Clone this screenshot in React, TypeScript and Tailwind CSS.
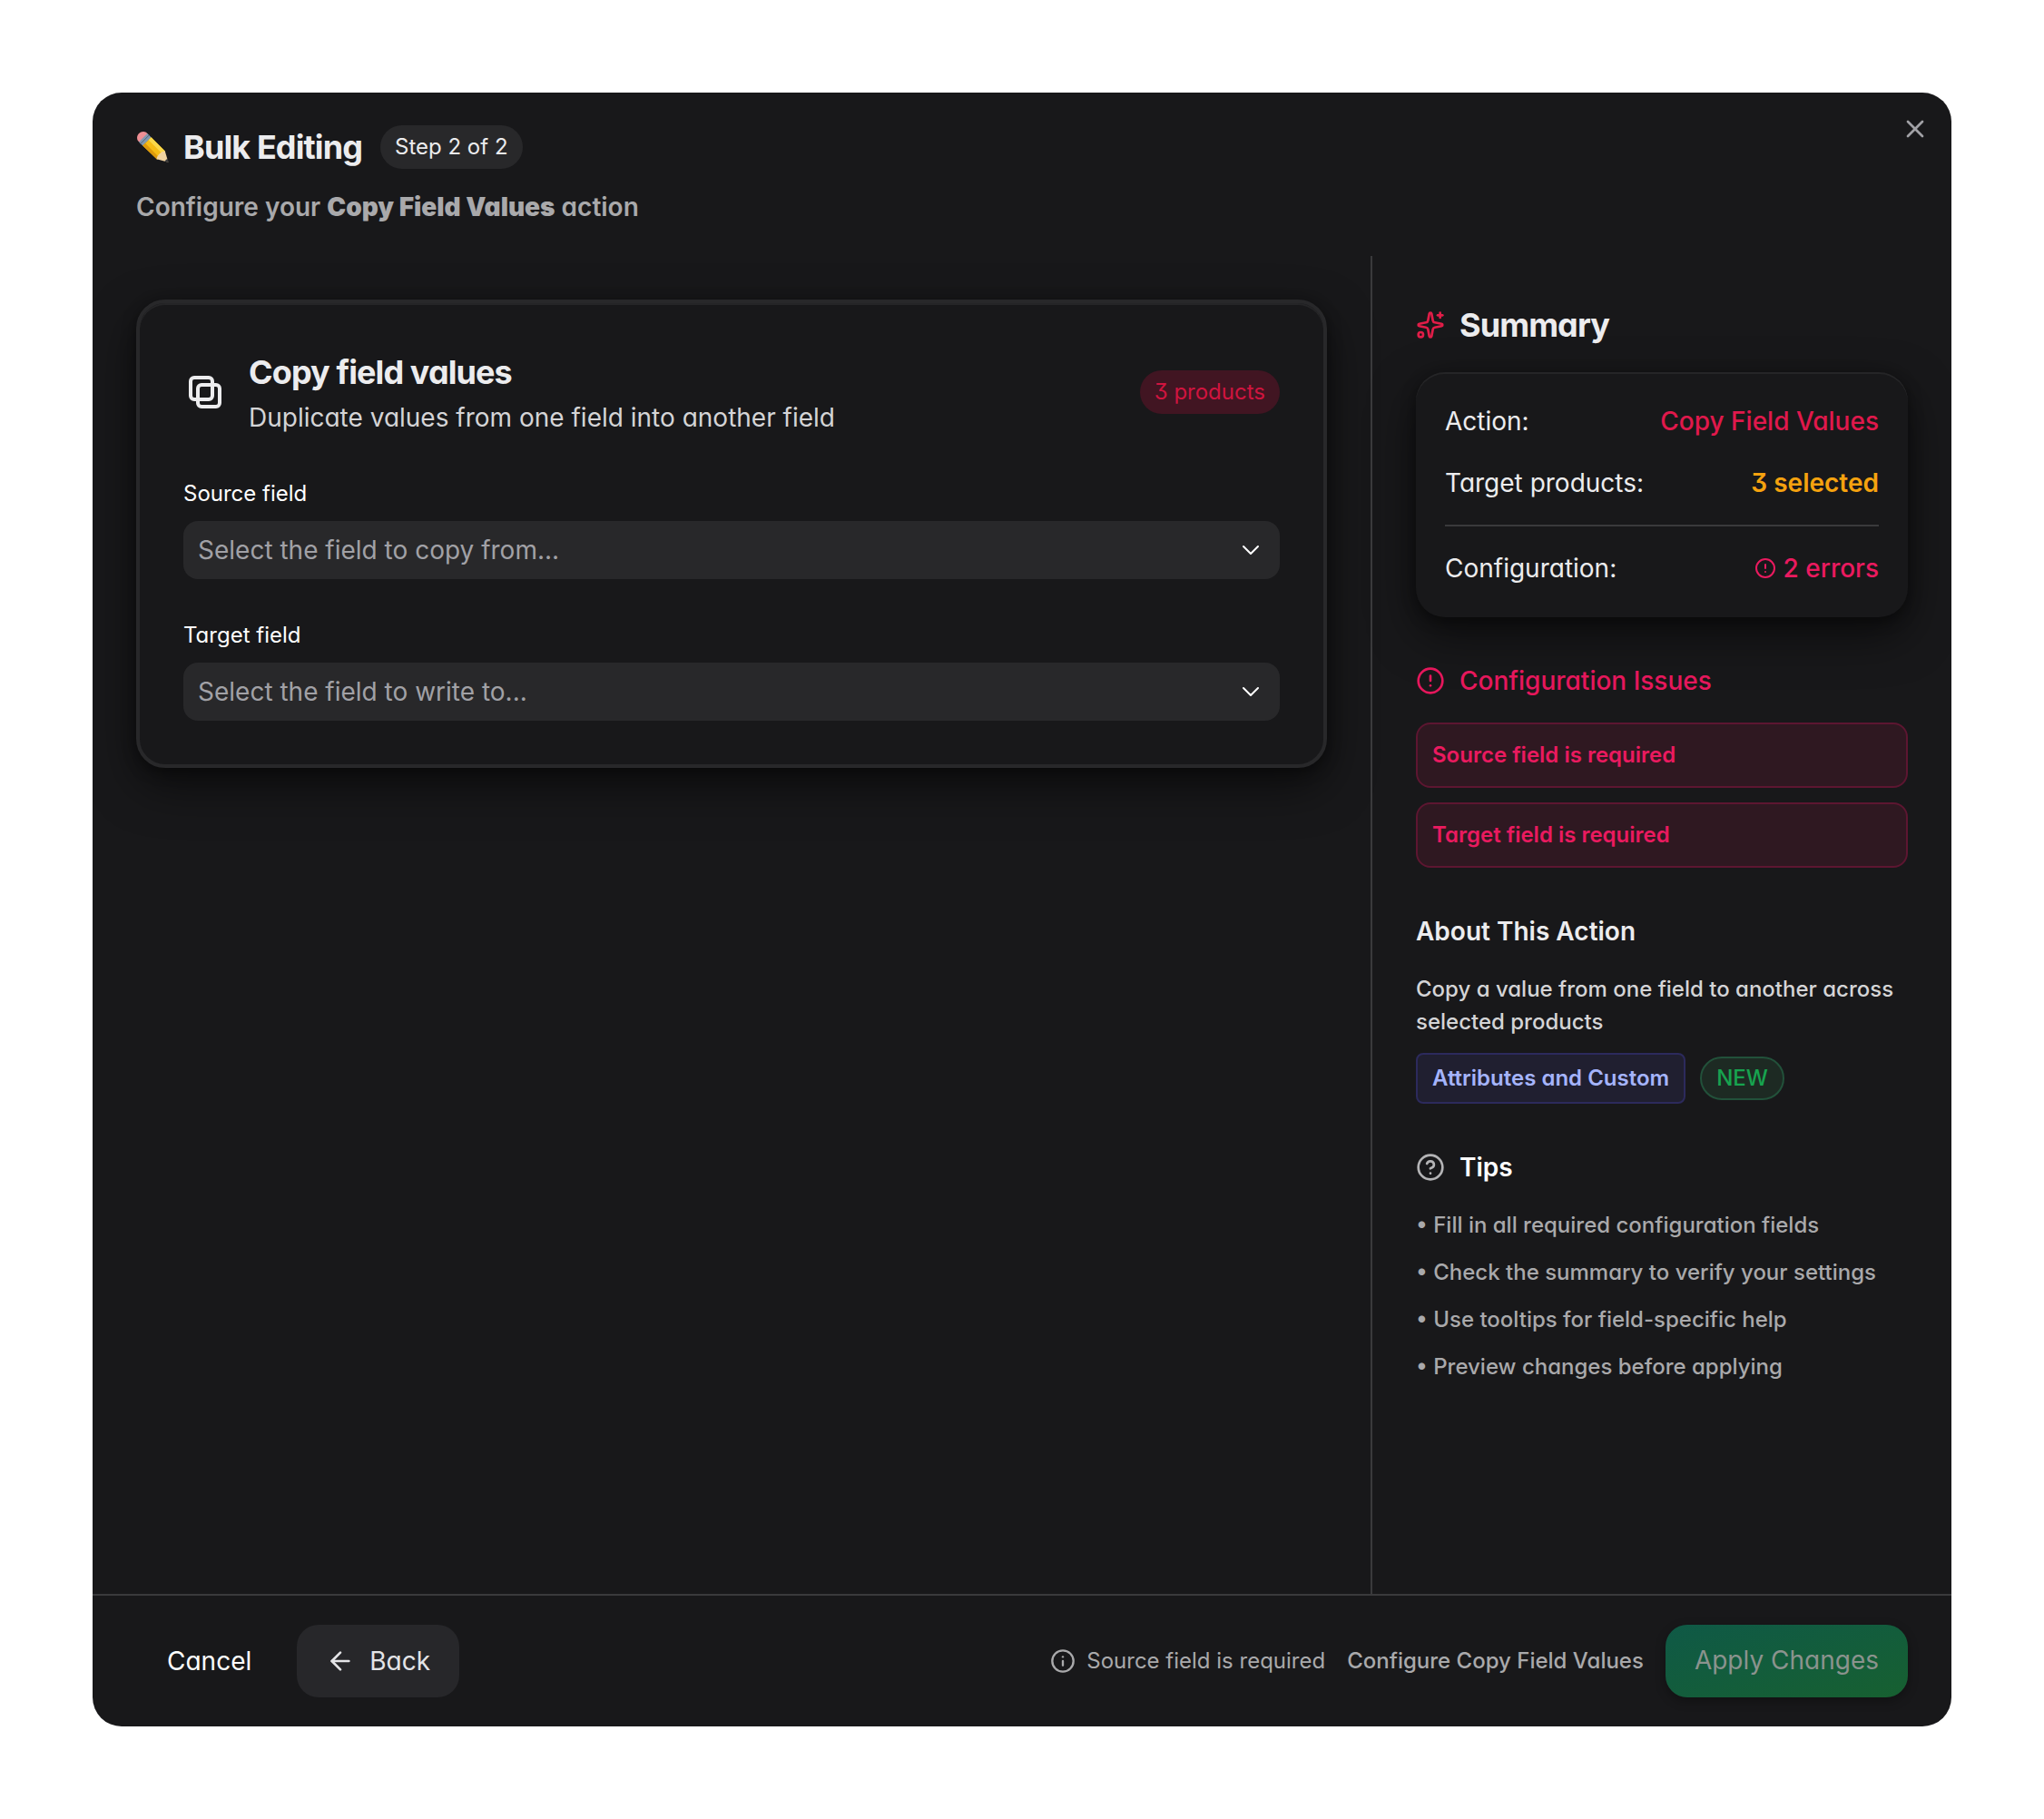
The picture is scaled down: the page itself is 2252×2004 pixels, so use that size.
import { ArrowLeft, ChevronDown, CircleAlert, CircleQuestionMark, Info, Sparkles, X } from 'lucide-react';

const issues = ['Source field is required', 'Target field is required'];

const tips = [
  'Fill in all required configuration fields',
  'Check the summary to verify your settings',
  'Use tooltips for field-specific help',
  'Preview changes before applying',
];

function PencilIcon() {
  return (
    <svg className="h-9 w-9 shrink-0" viewBox="0 0 36 36" aria-hidden="true">
      <path d="M2.400 11.600C-2 6 5-1.600 11 1.800l2 2-8.600 9z" fill="#ee8f94" />
      <path d="M3 12.400L12.400 3l4.400 4.400-9.400 9.400z" fill="#8199b0" />
      <path d="M4.800 14.400l9.600-9.600" stroke="#52667a" strokeWidth="1" />
      <path d="M7.200 16.600l9.400-9.400 15.200 15.400-8.600 9.200z" fill="#f6bd16" />
      <path d="M7.200 16.600l2.800-2.800 15.400 15.600-2.200 2.400z" fill="#dd9a0c" />
      <path d="M13.600 10.200l3-3 15.200 15.400-2.800 3z" fill="#fbd84a" />
      <path d="M22.600 31.200c.4-4 4.800-8.400 9.200-8.600L35.400 34.800z" fill="#f1d3a0" />
      <path d="M35.800 35.200l-4.400-1.600 3.200-3z" fill="#3a3a3c" />
    </svg>
  );
}

function CopySquaresIcon() {
  return (
    <svg
      className="h-12 w-12 shrink-0"
      viewBox="0 0 24 24"
      fill="none"
      stroke="currentColor"
      strokeWidth="2"
      aria-hidden="true"
    >
      <rect x="4" y="4" width="12" height="12" rx="2" />
      <rect x="8" y="8" width="12" height="12" rx="2" />
    </svg>
  );
}

function FieldSelect({ id, label, placeholder }: { id: string; label: string; placeholder: string }) {
  return (
    <div>
      <label htmlFor={id} className="mb-4 block text-2xl leading-7 text-white">
        {label}
      </label>
      <div className="relative">
        <select
          id={id}
          defaultValue=""
          className="block h-16 w-full appearance-none rounded-2xl bg-[#28282a] pr-16 pl-4 text-[28px] text-[#a1a1a6]"
        >
          <option value="">{placeholder}</option>
        </select>
        <ChevronDown
          className="pointer-events-none absolute top-4 right-4 h-8 w-8 text-white"
          strokeWidth={1.5}
        />
      </div>
    </div>
  );
}

function Header() {
  return (
    <header className="relative px-12 py-8">
      <div className="flex items-center gap-5">
        <h1 className="flex items-center gap-4 text-4xl leading-14 font-bold tracking-tight text-[#ececee]">
          <PencilIcon />
          Bulk Editing
        </h1>
        <span className="flex h-12 items-center rounded-full bg-[#28282a] px-4 text-2xl text-[#ececee]">
          Step 2 of 2
        </span>
      </div>
      <p className="mt-4 text-[28px] leading-11 font-semibold text-[#a9a9ab]">
        Configure your <strong className="font-black">Copy Field Values</strong> action
      </p>
      <button type="button" aria-label="Close" className="absolute top-6 right-6 text-[#a1a1a6]">
        <X className="h-8 w-8" />
      </button>
    </header>
  );
}

function Summary() {
  return (
    <section>
      <h2 className="flex items-center gap-4 text-4xl leading-14 font-bold tracking-tight text-[#ececee]">
        <Sparkles className="h-8 w-8 text-[#e11d48]" />
        Summary
      </h2>
      <div className="mt-6 space-y-6 rounded-4xl bg-[#18181a] p-8 text-[28px] leading-11 text-[#ececee] shadow-[0_20px_50px_rgba(0,0,0,0.5),0_4px_16px_rgba(0,0,0,0.4),inset_0_2px_0_rgba(255,255,255,0.06)]">
        <div className="flex justify-between">
          <span>Action:</span>
          <span className="font-medium text-[#e0184c]">Copy Field Values</span>
        </div>
        <div className="flex justify-between">
          <span>Target products:</span>
          <span className="font-semibold text-[#f5a20f]">3 selected</span>
        </div>
        <div className="h-0.5 bg-[#3a3a3c]" />
        <div className="flex justify-between">
          <span>Configuration:</span>
          <span className="flex items-center gap-2 font-medium text-[#ea1a5f]">
            <CircleAlert className="h-6 w-6" />2 errors
          </span>
        </div>
      </div>
    </section>
  );
}

function Sidebar() {
  return (
    <aside className="w-[640px] shrink-0 space-y-12 border-l-2 border-[#3a3a3c] p-12">
      <Summary />

      <section>
        <h3 className="flex items-center gap-4 text-[28px] leading-11 font-medium text-[#e6175c]">
          <CircleAlert className="h-8 w-8" />
          Configuration Issues
        </h3>
        <ul className="mt-6 space-y-4">
          {issues.map((issue) => (
            <li
              key={issue}
              className="rounded-2xl border-2 border-[#5d1631] bg-[#2f1821] p-4 text-2xl leading-9 font-semibold text-[#ea1a5f]"
            >
              {issue}
            </li>
          ))}
        </ul>
      </section>

      <section>
        <h3 className="text-[28px] leading-11 font-semibold text-[#ececee]">About This Action</h3>
        <p className="mt-6 text-2xl leading-9 font-medium text-[#d4d4d6]">
          Copy a value from one field to another across selected products
        </p>
        <div className="mt-4 flex items-center gap-4">
          <span className="flex h-14 items-center rounded-lg border-2 border-[#2c2a5c] bg-[#201f30] px-4 text-2xl font-semibold text-[#a5b4fc]">
            Attributes and Custom
          </span>
          <span className="flex h-12 items-center rounded-full border-2 border-[#22513a] bg-[#1d2a23] px-4 text-2xl font-medium text-[#17a34f]">
            NEW
          </span>
        </div>
      </section>

      <section>
        <h3 className="flex items-center gap-4 text-[28px] leading-11 font-semibold text-white">
          <CircleQuestionMark className="h-8 w-8 text-[#b4b4b6]" />
          Tips
        </h3>
        <ul className="mt-6 space-y-4 text-2xl leading-9 font-medium text-[#a9a9ab]">
          {tips.map((tip) => (
            <li key={tip}>• {tip}</li>
          ))}
        </ul>
      </section>
    </aside>
  );
}

function Footer() {
  return (
    <footer className="flex items-center justify-between border-t-2 border-[#3a3a3c] px-12 py-8">
      <div className="flex items-center gap-4">
        <button
          type="button"
          className="h-20 rounded-3xl border-2 border-transparent px-8 text-[28px] text-white"
        >
          Cancel
        </button>
        <button
          type="button"
          className="flex h-20 items-center gap-4 rounded-3xl bg-[#27272a] px-8 text-[28px] text-[#e4e4e7]"
        >
          <ArrowLeft className="h-8 w-8" strokeWidth={2} />
          Back
        </button>
      </div>
      <div className="flex items-center gap-6 text-2xl text-[#a9a9ab]">
        <span className="flex items-center gap-3">
          <Info className="h-7 w-7" />
          Source field is required
        </span>
        <span className="font-medium">Configure Copy Field Values</span>
        <button
          type="button"
          disabled
          className="h-20 rounded-3xl bg-linear-to-br from-[#0f5946] to-[#176030] px-8 text-[28px] text-[#8b938e] shadow-[0_4px_12px_rgba(0,0,0,0.3)]"
        >
          Apply Changes
        </button>
      </div>
    </footer>
  );
}

export default function App() {
  return (
    <div className="flex min-h-screen bg-white p-[102px] font-['Inter',sans-serif] [font-feature-settings:'cv09','cv11']">
      <div
        role="dialog"
        aria-label="Bulk Editing"
        className="flex flex-1 flex-col overflow-hidden rounded-4xl bg-[#18181a]"
      >
        <Header />
        <div className="flex flex-1">
          <main className="flex-1 p-12">
            <div className="rounded-4xl border-4 border-[#28282a] bg-[#18181a] p-12 shadow-[0_20px_50px_rgba(0,0,0,0.5),0_4px_16px_rgba(0,0,0,0.4),inset_0_2px_0_rgba(255,255,255,0.06)]">
              <div className="flex items-center gap-6 text-[#ececee]">
                <CopySquaresIcon />
                <div className="flex-1">
                  <h2 className="text-4xl leading-14 font-bold tracking-tight">Copy field values</h2>
                  <p className="text-[28px] leading-11 text-[#d4d4d6]">
                    Duplicate values from one field into another field
                  </p>
                </div>
                <span className="flex h-12 items-center rounded-full bg-[#411522] px-4 text-2xl text-[#d0143f]">
                  3 products
                </span>
              </div>
              <div className="mt-12 space-y-12">
                <FieldSelect id="source-field" label="Source field" placeholder="Select the field to copy from..." />
                <FieldSelect id="target-field" label="Target field" placeholder="Select the field to write to..." />
              </div>
            </div>
          </main>
          <Sidebar />
        </div>
        <Footer />
      </div>
    </div>
  );
}
